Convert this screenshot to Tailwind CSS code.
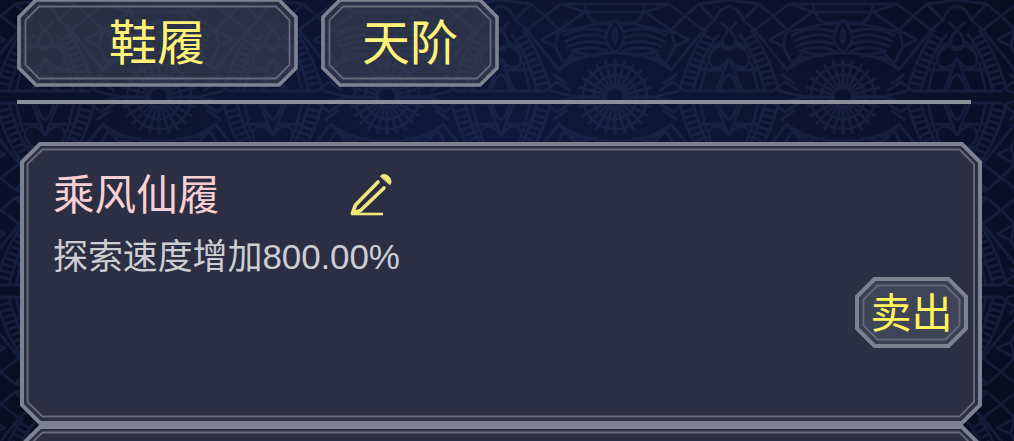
<!DOCTYPE html>
<html lang="zh-CN">
<head>
    <meta charset="UTF-8">
    <meta name="viewport" content="width=device-width, initial-scale=1.0">
    <title>鞋履</title>
    <script src="https://cdn.jsdelivr.net/npm/@tailwindcss/browser@4"></script>
</head>
<body class="w-[1014px] h-[441px] overflow-hidden bg-[#0b1129] font-['Liberation_Sans','Noto_Sans_CJK_SC',sans-serif]">
    <div class="relative w-[1014px] h-[441px] overflow-hidden">
        <!-- lace background -->
        <svg class="absolute inset-0" width="1014" height="441">
            <defs>
                <radialGradient id="glow" gradientUnits="userSpaceOnUse" cx="0" cy="0" r="1" gradientTransform="translate(480 190) scale(620 360)">
                    <stop offset="0" stop-color="#0e1a40"/>
                    <stop offset="0.5" stop-color="#0c1532"/>
                    <stop offset="1" stop-color="#090d20"/>
                </radialGradient>
                <g id="quarter" fill="none" stroke="#27335a" stroke-width="2.800" stroke-linejoin="round"></g>
                <pattern id="lace" patternUnits="userSpaceOnUse" x="45" y="0" width="228" height="194">
                    <use href="#quarter"/>
                    <use href="#quarter" transform="translate(228 0) scale(-1 1)"/>
                    <use href="#quarter" transform="translate(0 194) scale(1 -1)"/>
                    <use href="#quarter" transform="translate(228 194) scale(-1 -1)"/>
                </pattern>
            </defs>
            <rect width="1014" height="441" fill="url(#glow)"/>
            <rect width="1014" height="441" fill="url(#lace)" opacity="0.38"/>
        </svg>

        <div class="relative">
            <div class="flex gap-[23px] pl-[17px] -mt-[2px]">
                <button class="relative w-[281px] h-[89px] flex items-center justify-center text-[48px] leading-none text-[#fff377]">
                    <svg class="absolute inset-0" width="281" height="89" fill="none">
                        <path d="M19 2H262L279 19V70L262 87H19L2 70V19Z" fill="#444958" fill-opacity=".55" stroke="#7e8392" stroke-width="3.6"/>
                        <path d="M22 8.500H259L272.500 22V67L259 80.500H22L8.500 67V22Z" stroke="#656a7a" stroke-width="1.800"/>
                    </svg>
                    <span class="relative pt-[2px] pr-px">鞋履</span>
                </button>
                <button class="relative w-[178px] h-[89px] flex items-center justify-center text-[48px] leading-none text-[#fff377]">
                    <svg class="absolute inset-0" width="178" height="89" fill="none">
                        <path d="M19 2H159L176 19V70L159 87H19L2 70V19Z" fill="#444958" fill-opacity=".55" stroke="#7e8392" stroke-width="3.6"/>
                        <path d="M22 8.500H156L169.500 22V67L156 80.500H22L8.500 67V22Z" stroke="#656a7a" stroke-width="1.800"/>
                    </svg>
                    <span class="relative pt-[2px]">天阶</span>
                </button>
            </div>

            <div class="mt-[13px] ml-[17px] w-[954px] h-[4px] bg-[#8b909c]"></div>

            <div class="relative mt-[38px] ml-[20px] w-[962px] h-[283px]">
                <svg class="absolute inset-0" width="962" height="283" fill="none">
                    <path d="M20 2H942L960 20V263L942 281H20L2 263V20Z" fill="#2c2f43" stroke="#7e8191" stroke-width="4"/>
                    <path d="M22.500 7.500H939.500L954 22V260L939.500 274.500H22.500L7.500 260V22Z" stroke="#696a7a" stroke-width="1.800"/>
                </svg>
                <div class="relative h-full flex justify-between pl-[33px] pr-[14px]">
                    <div class="pt-[32px]">
                        <div class="flex items-start h-[42px]">
                            <h2 class="w-[296px] pt-px text-[41.600px] leading-[42px] text-[#f8d0d4]">乘风仙履</h2>
                            <svg width="44" height="44" viewBox="0 0 44 44" fill="none" stroke="#f2e87a" stroke-width="3.600" stroke-linecap="round" stroke-linejoin="round">
                                <path d="M29 8L6.500 31L3.500 39L11.500 36.500L35 14"/>
                                <path d="M2 40H34" stroke-width="2.600" stroke-linecap="butt"/>
                                <path d="M31.500 2C33.500 -.5 37.500 0 40 3C42.500 6 42.500 8.500 41 10.500Z" fill="#f2e87a" stroke-width="1"/>
                            </svg>
                        </div>
                        <p class="mt-[20px] text-[35px] leading-[42px] tracking-[-0.100px] text-[#cdced4]">探索速度增加800.00%</p>
                    </div>
                    <button class="relative mt-[135px] w-[113px] h-[71px] flex items-center justify-center text-[41px] leading-none text-[#fff45c]">
                        <svg class="absolute inset-0" width="113" height="71" fill="none">
                            <path d="M19.500 2H93.500L111 19.500V51.500L93.500 69H19.500L2 51.500V19.500Z" fill="#3b3f52" stroke="#7e8290" stroke-width="4"/>
                            <path d="M22.500 8.500H90.500L104.500 22.500V48.500L90.500 62.500H22.500L8.500 48.500V22.500Z" fill="#404457" stroke="#656979" stroke-width="1.800"/>
                        </svg>
                        <span class="relative pt-[3px]">卖出</span>
                    </button>
                </div>
            </div>

            <!-- next item, cut off by the viewport -->
            <div class="ml-[20px] w-[962px] h-[16px] overflow-hidden">
                <svg width="962" height="283" fill="none">
                    <path d="M20 2H942L960 20V263L942 281H20L2 263V20Z" fill="#2c2f43" stroke="#7e8191" stroke-width="4"/>
                    <path d="M22.500 7.500H939.500L954 22V260L939.500 274.500H22.500L7.500 260V22Z" stroke="#696a7a" stroke-width="1.800"/>
                </svg>
            </div>
        </div>
    </div>

    <script>
        // one quarter of the lace tile, mirrored by the pattern
        const d = [
            'M0 30Q9 38 6 46Q3 50 0 50M0 48C8 42 20 50 20 60C20 69 8 72 0 58',
            'M0 58L13 91M0 74Q7 79 9 91M5 70H28M22 62L29 91M0 91H44M0 30L8 22M5 40L18 48',
            'M10 34Q26 52 36 91M22 30Q38 50 50 91',
            'M24 28L58 70Q78 53 114 53M58 70L74 52L96 56M62 62L78 56',
            'M0 6Q10 8 14 20L26 30M14 20L30 4M30 4L44 16L26 30M44 16L60 4M44 16L58 30L40 40M58 30L54 46L40 40M54 46L62 62',
            'M58 32Q76 28 104 22M62 36Q84 24 106 32M64 42Q86 30 105 38M66 47Q86 38 105 44M70 51Q90 44 108 52',
            'M114 20Q104 30 105 40Q107 48 114 52M114 28Q110 36 114 44',
            'M84 4H114M84 12H114M84 4Q86 22 100 24Q108 24 114 20M60 4L84 12L58 30M0 0L30 4M60 4L84 4',
            'M44 91L56 82L70 91M52 74L66 84M50 91L76 97'
        ];
        // ladder rungs
        for (let i = 0; i < 9; i++) {
            const t = i / 9;
            d.push(`M${15 + 21 * t} ${40 + 51 * t}L${25 + 25 * t} ${35 + 53 * t}`);
        }
        // medallion spokes and rings
        for (let a = 0; a <= 90; a += 15) {
            const c = Math.cos(a * Math.PI / 180), s = Math.sin(a * Math.PI / 180);
            d.push(`M${114 - 8 * c} ${97 - 8 * s}L${114 - 38 * c} ${97 - 38 * s}`);
        }
        d.push('M92 97A22 22 0 0 1 114 75M82 97A32 32 0 0 1 114 65');
        const path = document.createElementNS('http://www.w3.org/2000/svg', 'path');
        path.setAttribute('d', d.join(''));
        document.getElementById('quarter').appendChild(path);
    </script>
</body>
</html>
